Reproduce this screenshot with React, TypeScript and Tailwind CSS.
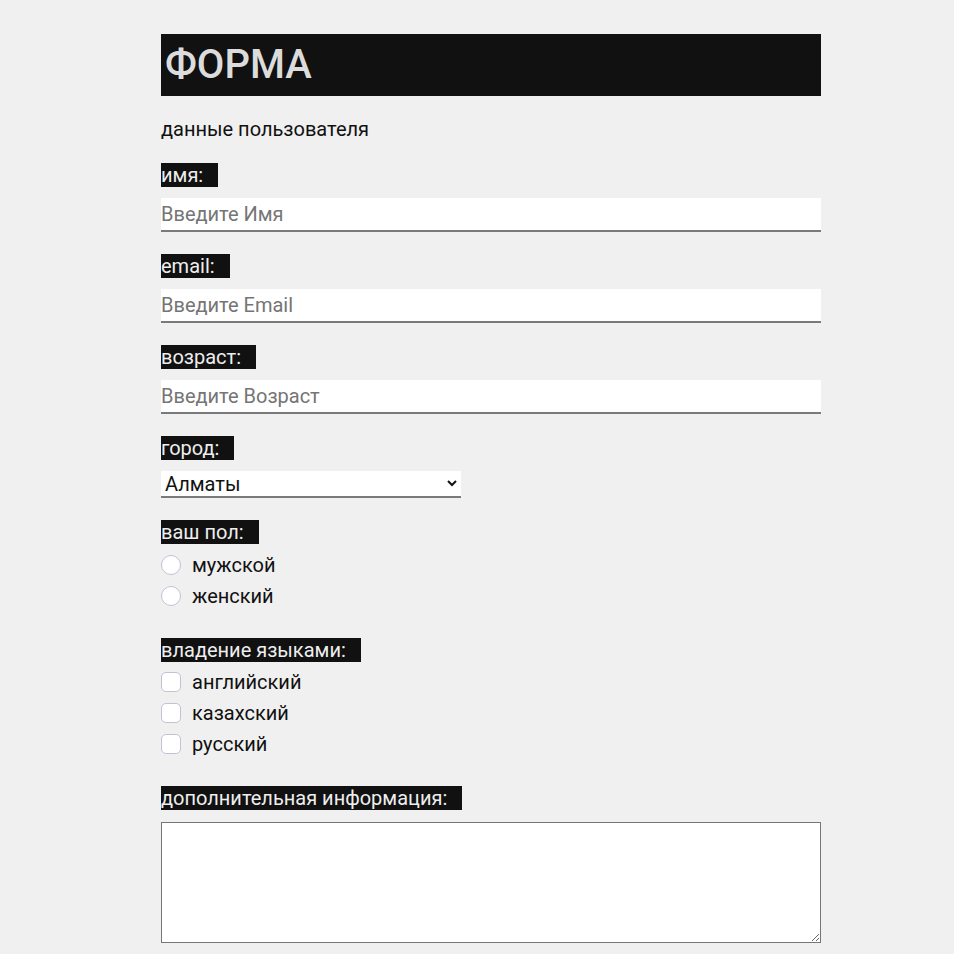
import React from "react";

const font = { fontFamily: "Roboto, 'Noto Sans', sans-serif" };

function Label({ children }: { children: React.ReactNode }) {
  return (
    <div className="flex">
      <span className="inline-block bg-[#111111] text-[#eeeeee] text-[20px] leading-[24px] pr-[15px]">
        {children}
      </span>
    </div>
  );
}

function Radio({ label, name }: { label: string; name: string }) {
  return (
    <label className="flex items-center h-[31px]">
      <input
        type="radio"
        name={name}
        className="appearance-none w-[20px] h-[20px] rounded-full border border-[#c2c2d4] bg-white m-0"
      />
      <span className="ml-[11px] text-[20px] leading-[24px] text-[#111]">{label}</span>
    </label>
  );
}

function Check({ label }: { label: string }) {
  return (
    <label className="flex items-center h-[31px]">
      <input
        type="checkbox"
        className="appearance-none w-[20px] h-[20px] rounded-[5px] border border-[#c2c2d4] bg-white m-0"
      />
      <span className="ml-[11px] text-[20px] leading-[24px] text-[#111]">{label}</span>
    </label>
  );
}

function TextInput({ placeholder }: { placeholder: string }) {
  return (
    <input
      type="text"
      placeholder={placeholder}
      className="block w-full h-[34px] bg-white border-b-2 border-[#7a7a7a] outline-none text-[20px] px-0 placeholder:text-[#757575]"
    />
  );
}

export default function App() {
  return (
    <div className="min-h-screen bg-[#f0f0f0] text-[#111]" style={font}>
      <div className="ml-[161px] w-[660px] pt-[34px] pb-[20px]">
        <div className="h-[62px] bg-[#111111] flex items-center pl-[4px]">
          <h1 className="text-[40px] leading-none text-[#dcdcdc] font-medium">ФОРМА</h1>
        </div>
        <div className="mt-[21px] text-[20px] leading-[24px]">данные пользователя</div>

        <div className="mt-[22px]">
          <Label>имя:</Label>
          <div className="mt-[11px]">
            <TextInput placeholder="Введите Имя" />
          </div>
        </div>
        <div className="mt-[22px]">
          <Label>email:</Label>
          <div className="mt-[11px]">
            <TextInput placeholder="Введите Email" />
          </div>
        </div>
        <div className="mt-[22px]">
          <Label>возраст:</Label>
          <div className="mt-[11px]">
            <TextInput placeholder="Введите Возраст" />
          </div>
        </div>
        <div className="mt-[22px]">
          <Label>город:</Label>
          <div className="mt-[11px] relative w-[300px] h-[27px] bg-white border-b-2 border-[#7a7a7a]">
            <select className="appearance-none w-full h-full bg-transparent outline-none text-[20px] leading-[24px] pl-[4px] text-[#111]">
              <option>Алматы</option>
              <option>Астана</option>
              <option>Шымкент</option>
            </select>
            <svg
              className="absolute right-[4px] top-[8px] pointer-events-none"
              width="10"
              height="8"
              viewBox="0 0 10 8"
            >
              <path d="M1 2 L5 6 L9 2" fill="none" stroke="#111" strokeWidth="2" />
            </svg>
          </div>
        </div>
        <div className="mt-[22px]">
          <Label>ваш пол:</Label>
          <div className="mt-[5px]">
            <Radio name="g" label="мужской" />
            <Radio name="g" label="женский" />
          </div>
        </div>
        <div className="mt-[27px]">
          <Label>владение языками:</Label>
          <div className="mt-[4px]">
            <Check label="английский" />
            <Check label="казахский" />
            <Check label="русский" />
          </div>
        </div>
        <div className="mt-[27px]">
          <Label>дополнительная информация:</Label>
          <textarea className="block mt-[12px] w-full h-[121px] bg-white border border-[#767676] outline-none text-[20px]" />
        </div>
      </div>
    </div>
  );
}
